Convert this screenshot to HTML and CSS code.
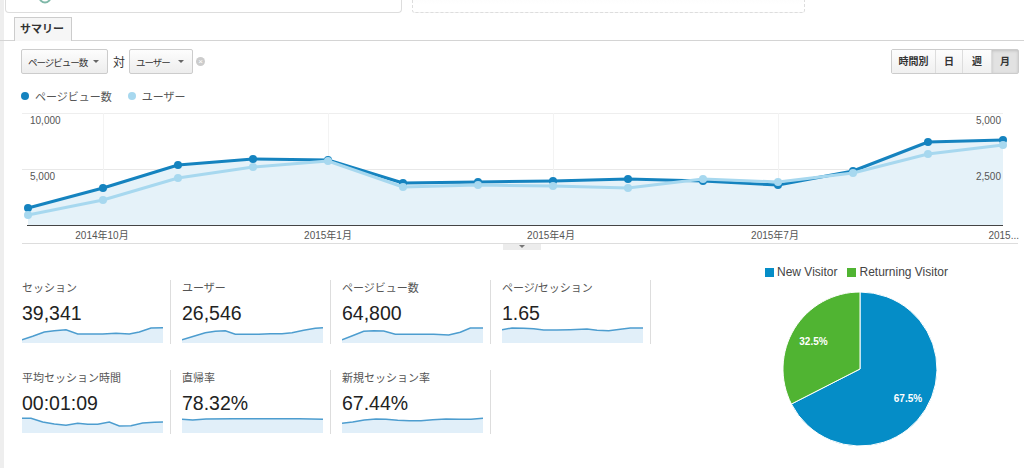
FILE: index.html
```html
<!DOCTYPE html>
<html>
<head>
    <title>サマリー</title>
    <link rel="stylesheet" href="styles.css">
</head>
<body>
    <div class="top">
        <div class="card">
            <svg class="card-icon" width="14" height="14" viewBox="0 0 14 14"><circle cx="7" cy="7" r="5.5" fill="none" stroke="#7fb8a8" stroke-width="2"/></svg>
            <span class="card-text">100.00%</span>
        </div>
        <div class="drop-box"></div>
    </div>

    <div class="tabs">
        <span class="tab">サマリー</span>
    </div>

    <div class="controls">
        <div class="select">ページビュー数<i class="caret"></i></div>
        <span class="vs">対</span>
        <div class="select">ユーザー<i class="caret"></i></div>
        <span class="clear">×</span>
        <div class="periods">
            <span class="period">時間別</span>
            <span class="period">日</span>
            <span class="period">週</span>
            <span class="period active">月</span>
        </div>
    </div>

    <div class="legend">
        <span class="dot dark"></span><span class="legend-text">ページビュー数</span>
        <span class="dot light"></span><span class="legend-text">ユーザー</span>
    </div>

    <svg class="chart" width="1024" height="147" viewBox="0 104 1024 147">
        <line x1="22" y1="113.5" x2="1003" y2="113.5" stroke="#eeeeee"/>
        <line x1="22" y1="169.5" x2="1003" y2="169.5" stroke="#e8e8e8"/>
        <line x1="103.5" y1="113" x2="103.5" y2="225" stroke="#f3f3f3"/>
        <line x1="328.5" y1="113" x2="328.5" y2="225" stroke="#f3f3f3"/>
        <line x1="553.5" y1="113" x2="553.5" y2="225" stroke="#f3f3f3"/>
        <line x1="778.5" y1="113" x2="778.5" y2="225" stroke="#f3f3f3"/>
        <polygon fill="#e5f2f9" points="28,208 103,188 178,165 253,159 328,160 403,183 478,182 553,181 628,179 703,181 778,185 853,171 928,142 1003,140 1003,225 28,225"/>
        <line x1="27" y1="225.5" x2="1003" y2="225.5" stroke="#444"/>
        <polyline fill="none" stroke="#1583bf" stroke-width="3" stroke-linejoin="round" points="28,208 103,188 178,165 253,159 328,160 403,183 478,182 553,181 628,179 703,181 778,185 853,171 928,142 1003,140"/>
        <g fill="#1583bf">
            <circle cx="28" cy="208" r="4"/><circle cx="103" cy="188" r="4"/><circle cx="178" cy="165" r="4"/><circle cx="253" cy="159" r="4"/><circle cx="328" cy="160" r="4"/><circle cx="403" cy="183" r="4"/><circle cx="478" cy="182" r="4"/><circle cx="553" cy="181" r="4"/><circle cx="628" cy="179" r="4"/><circle cx="703" cy="181" r="4"/><circle cx="778" cy="185" r="4"/><circle cx="853" cy="171" r="4"/><circle cx="928" cy="142" r="4"/><circle cx="1003" cy="140" r="4"/>
        </g>
        <polyline fill="none" stroke="#a7d8ef" stroke-width="3" stroke-linejoin="round" points="28,215 103,200 178,178 253,167 328,161 403,187 478,185 553,186 628,188 703,179 778,182 853,173 928,154 1003,145"/>
        <g fill="#a7d8ef">
            <circle cx="28" cy="215" r="4"/><circle cx="103" cy="200" r="4"/><circle cx="178" cy="178" r="4"/><circle cx="253" cy="167" r="4"/><circle cx="328" cy="161" r="4"/><circle cx="403" cy="187" r="4"/><circle cx="478" cy="185" r="4"/><circle cx="553" cy="186" r="4"/><circle cx="628" cy="188" r="4"/><circle cx="703" cy="179" r="4"/><circle cx="778" cy="182" r="4"/><circle cx="853" cy="173" r="4"/><circle cx="928" cy="154" r="4"/><circle cx="1003" cy="145" r="4"/>
        </g>
        <g class="axis">
            <text x="30" y="123.5">10,000</text>
            <text x="30" y="180">5,000</text>
            <text x="1001" y="123.5" text-anchor="end">5,000</text>
            <text x="1001" y="180" text-anchor="end">2,500</text>
            <text x="102" y="238.5" text-anchor="middle">2014年10月</text>
            <text x="328" y="238.5" text-anchor="middle">2015年1月</text>
            <text x="551" y="238.5" text-anchor="middle">2015年4月</text>
            <text x="775" y="238.5" text-anchor="middle">2015年7月</text>
            <text x="1019" y="238.5" text-anchor="end">2015...</text>
        </g>
        <line x1="22" y1="243.5" x2="1018" y2="243.5" stroke="#dddddd"/>
        <rect x="503" y="244" width="38" height="6" fill="#ececec"/>
        <polygon points="519,245 525,245 522,248" fill="#777"/>
    </svg>

    <div class="lower">
        <div class="metrics">
            <div class="metric">
                <div class="m-label">セッション</div>
                <div class="m-value">39,341</div>
                <svg class="spark" width="141" height="17" viewBox="0 0 141 17"><polygon points="0,13.7 10.7,10.3 22.3,6 32.3,4.7 44,3.7 55.7,8 67.3,8 80.7,8 94,7.3 107.3,8 117.3,6 129,2 141,1.7 141,17 0,17"/><polyline points="0,13.7 10.7,10.3 22.3,6 32.3,4.7 44,3.7 55.7,8 67.3,8 80.7,8 94,7.3 107.3,8 117.3,6 129,2 141,1.7"/></svg>
            </div>
            <div class="metric">
                <div class="m-label">ユーザー</div>
                <div class="m-value">26,546</div>
                <svg class="spark" width="141" height="17" viewBox="0 0 141 17"><polygon points="0,13.7 11.7,10.3 23.3,6.7 33.3,5.3 43.3,4.7 53.3,8.3 65,8.3 76.7,8.3 88.3,7.7 100,7.7 110,6.7 121.7,4.3 133.3,2.3 141,1.7 141,17 0,17"/><polyline points="0,13.7 11.7,10.3 23.3,6.7 33.3,5.3 43.3,4.7 53.3,8.3 65,8.3 76.7,8.3 88.3,7.7 100,7.7 110,6.7 121.7,4.3 133.3,2.3 141,1.7"/></svg>
            </div>
            <div class="metric">
                <div class="m-label">ページビュー数</div>
                <div class="m-value">64,800</div>
                <svg class="spark" width="141" height="17" viewBox="0 0 141 17"><polygon points="0,13.7 11.7,9.3 21.7,5.3 31.7,4.7 41.7,5 53.3,8.3 65,8.3 78.3,8.3 91.7,8.3 106.7,9 118.3,6.3 128.3,2 141,2 141,17 0,17"/><polyline points="0,13.7 11.7,9.3 21.7,5.3 31.7,4.7 41.7,5 53.3,8.3 65,8.3 78.3,8.3 91.7,8.3 106.7,9 118.3,6.3 128.3,2 141,2"/></svg>
            </div>
            <div class="metric">
                <div class="m-label">ページ/セッション</div>
                <div class="m-value">1.65</div>
                <svg class="spark" width="141" height="17" viewBox="0 0 141 17"><polygon points="0,3.7 10,2 21.7,2.3 31.7,2.7 41.7,4 55,4 68.3,3.7 85,3 95,4.3 106.7,4.7 118.3,3.3 128.3,2 141,2 141,17 0,17"/><polyline points="0,3.7 10,2 21.7,2.3 31.7,2.7 41.7,4 55,4 68.3,3.7 85,3 95,4.3 106.7,4.7 118.3,3.3 128.3,2 141,2"/></svg>
            </div>
            <div class="metric">
                <div class="m-label">平均セッション時間</div>
                <div class="m-value">00:01:09</div>
                <svg class="spark" width="141" height="17" viewBox="0 0 141 17"><polygon points="0,2.3 9,2.3 20.7,6 32.3,8 44,9.3 55.7,7.3 65.7,8.3 75.7,8.3 87.3,6 97.3,10 109,9.7 120.7,7 132.3,6.3 141,6 141,17 0,17"/><polyline points="0,2.3 9,2.3 20.7,6 32.3,8 44,9.3 55.7,7.3 65.7,8.3 75.7,8.3 87.3,6 97.3,10 109,9.7 120.7,7 132.3,6.3 141,6"/></svg>
            </div>
            <div class="metric">
                <div class="m-label">直帰率</div>
                <div class="m-value">78.32%</div>
                <svg class="spark" width="141" height="17" viewBox="0 0 141 17"><polygon points="0,3.3 10.7,4 24,3 50.7,2.7 84,2.7 117.3,2.7 141,3.3 141,17 0,17"/><polyline points="0,3.3 10.7,4 24,3 50.7,2.7 84,2.7 117.3,2.7 141,3.3"/></svg>
            </div>
            <div class="metric">
                <div class="m-label">新規セッション率</div>
                <div class="m-value">67.44%</div>
                <svg class="spark" width="141" height="17" viewBox="0 0 141 17"><polygon points="0,7.3 10.7,6 22.3,4 34,3 44,3.3 55.7,4.3 67.3,4.7 79,4.7 90.7,3.7 104,3 117.3,3.3 129,3.3 141,2.3 141,17 0,17"/><polyline points="0,7.3 10.7,6 22.3,4 34,3 44,3.3 55.7,4.3 67.3,4.7 79,4.7 90.7,3.7 104,3 117.3,3.3 129,3.3 141,2.3"/></svg>
            </div>
        </div>

        <div class="visitors">
            <div class="pie-legend">
                <span class="sq blue"></span><span>New Visitor</span>
                <span class="sq green"></span><span>Returning Visitor</span>
            </div>
            <svg class="pie" width="160" height="160" viewBox="0 0 160 160">
                <path d="M80,80 L80,3 A77,77 0 1 1 11.4,115 Z" fill="#058dc7" stroke="#fff" stroke-width="1"/>
                <path d="M80,80 L11.4,115 A77,77 0 0 1 80,3 Z" fill="#50b432" stroke="#fff" stroke-width="1"/>
                <text x="33.5" y="55.5" text-anchor="middle">32.5%</text>
                <text x="128" y="112.5" text-anchor="middle">67.5%</text>
            </svg>
        </div>
    </div>
</body>
</html>
```

FILE: styles.css
```css
body {
    margin: 0;
    width: 1024px;
    overflow: hidden;
    font-family: "Liberation Sans", Arial, "Noto Sans CJK JP", sans-serif;
    color: #333;
    background: linear-gradient(to right, #eeeeee 0, #eeeeee 4px, #ffffff 4px);
}
.top {
    display: flex;
    align-items: flex-end;
    height: 13px;
    padding-left: 5px;
}
.card {
    display: flex;
    align-items: flex-end;
    box-sizing: border-box;
    width: 397px;
    height: 40px;
    flex-shrink: 0;
    border: 1px solid #dddddd;
    border-top: none;
    border-radius: 0 0 4px 4px;
    background: #fff;
    padding: 0 0 9px 32px;
}
.card-icon {
    margin-bottom: -1px;
}
.card-text {
    margin-left: 14px;
    font-size: 10px;
    line-height: 12px;
    color: #999;
}
.drop-box {
    box-sizing: border-box;
    width: 393px;
    height: 40px;
    flex-shrink: 0;
    margin-left: 10px;
    border: 1px dashed #dddddd;
    border-top: none;
    border-radius: 0 0 3px 3px;
    background: linear-gradient(#f3f3f3, #ffffff 80%);
}
.tabs {
    margin-top: 4px;
    height: 23px;
    border-bottom: 1px solid #d4d4d4;
    padding-left: 14px;
}
.tab {
    display: inline-block;
    box-sizing: border-box;
    width: 58px;
    height: 24px;
    border: 1px solid #cccccc;
    border-bottom: none;
    background: #f6f6f6;
    font-size: 11px;
    font-weight: bold;
    line-height: 22px;
    padding-left: 5px;
    color: #333;
}
.controls {
    display: flex;
    align-items: center;
    height: 25px;
    padding: 8px 5px 0 21px;
}
.select {
    display: flex;
    align-items: center;
    box-sizing: border-box;
    height: 25px;
    padding: 0 5px 0 6px;
    border: 1px solid #cccccc;
    border-radius: 2px;
    background: linear-gradient(#fdfdfd, #ededed);
    font-size: 9.5px;
    letter-spacing: -1px;
    color: #333;
}
.select:first-child {
    width: 87px;
}
.select:nth-child(3) {
    width: 64px;
}
.caret {
    margin-left: auto;
    margin-right: 3px;
    border-top: 3px solid #666;
    border-left: 3px solid transparent;
    border-right: 3px solid transparent;
}
.vs {
    font-size: 12px;
    margin: 0 4px 0 5px;
}
.clear {
    display: inline-block;
    width: 9px;
    height: 9px;
    margin-left: 3px;
    border-radius: 50%;
    background: #cccccc;
    color: #fff;
    font-size: 8px;
    line-height: 9px;
    text-align: center;
}
.periods {
    display: flex;
    margin-left: auto;
    height: 25px;
    border: 1px solid #cccccc;
    border-radius: 2px;
    box-sizing: border-box;
}
.period {
    box-sizing: border-box;
    height: 23px;
    line-height: 23px;
    text-align: center;
    font-size: 10px;
    font-weight: bold;
    color: #333;
    background: linear-gradient(#fdfdfd, #f0f0f0);
    border-left: 1px solid #dddddd;
}
.period:first-child {
    width: 43px;
    border-left: none;
}
.period:nth-child(2) {
    width: 27px;
}
.period:nth-child(3) {
    width: 29px;
}
.period:nth-child(4) {
    width: 27px;
}
.period.active {
    background: #e2e2e2;
    box-shadow: inset 0 1px 3px rgba(0, 0, 0, 0.15);
}
.legend {
    display: flex;
    align-items: center;
    height: 16px;
    margin-top: 14px;
    padding-left: 21px;
    font-size: 11px;
    color: #555;
}
.dot {
    width: 8px;
    height: 8px;
    border-radius: 50%;
    margin-right: 6px;
}
.dot.dark {
    background: #1583bf;
}
.dot.light {
    background: #a7d8ef;
    margin-left: 16px;
}
.chart {
    display: block;
}
.axis text {
    font-size: 10px;
    fill: #555;
}
.lower {
    display: flex;
}
.metrics {
    display: grid;
    grid-template-columns: repeat(4, 160px);
    row-gap: 26px;
    margin: 29px 0 0 11px;
    align-self: flex-start;
}
.metric {
    box-sizing: border-box;
    height: 64px;
    padding: 1px 8px 0 11px;
    border-right: 1px solid #dddddd;
}
.m-label {
    font-size: 11px;
    line-height: 14px;
    color: #555;
}
.m-value {
    margin-top: 7px;
    font-size: 19.5px;
    line-height: 22px;
    color: #222;
}
.spark {
    display: block;
    margin-top: 2px;
}
.spark polygon {
    fill: #e1eff9;
}
.spark polyline {
    fill: none;
    stroke: #4d9dcf;
    stroke-width: 1.5;
}
.visitors {
    display: flex;
    flex-direction: column;
    align-items: flex-start;
    margin: 14px 0 0 114px;
}
.pie-legend {
    display: flex;
    align-items: center;
    height: 14px;
    font-size: 12px;
    color: #444;
    white-space: nowrap;
}
.sq {
    width: 9px;
    height: 9px;
    margin-right: 3px;
}
.sq.blue {
    background: #058dc7;
}
.sq.green {
    background: #50b432;
    margin-left: 10px;
}
.pie {
    display: block;
    margin: 10px 0 0 15px;
}
.pie text {
    font-size: 10px;
    font-weight: bold;
    fill: #fff;
}
```
